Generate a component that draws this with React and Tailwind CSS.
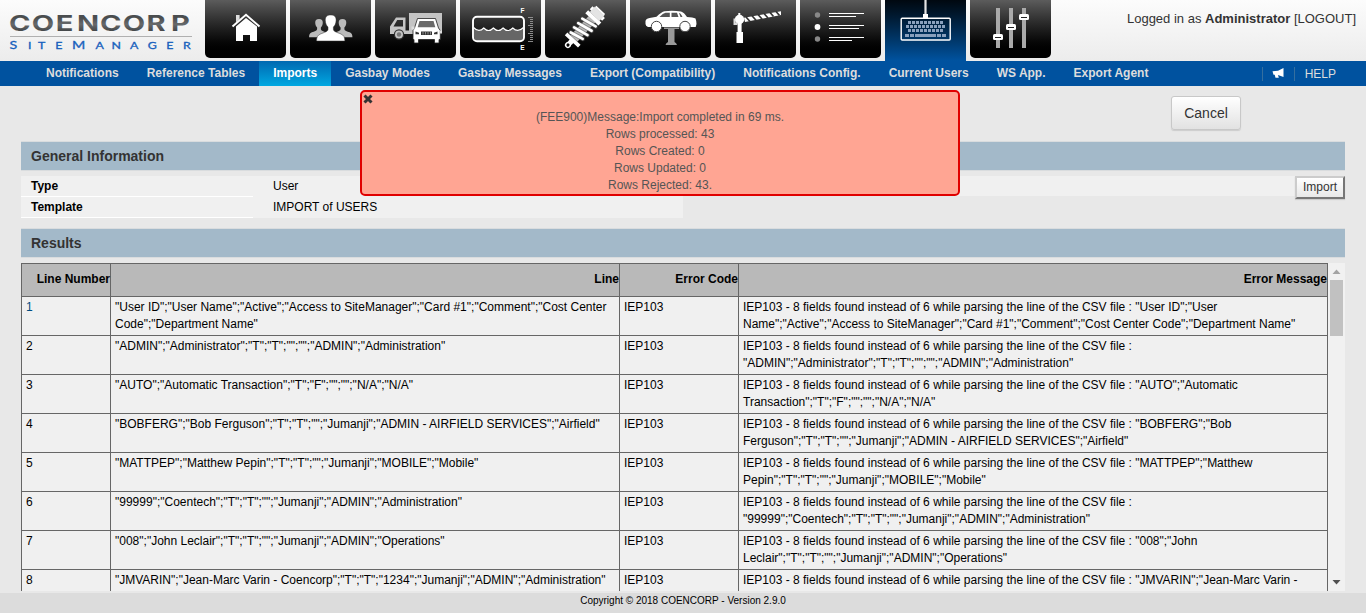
import React from 'react';

const House = () => (
  <>
    <path d="M31 15h3.600v4L31 22.500z" fill="#ddd" />
    <path d="M27.500 26.500 41 14.800 54.500 26.500" fill="none" stroke="#fff" strokeWidth="2" />
    <path d="M31 26.500 41 18l11 8.500V41h-7v-6h-7v6h-7z" fill="#fff" />
  </>
);

const Person = ({ fill }) => (
  <path d="M0 0c-4 0-5.600 2-5.400 5.500.2 3 1 5 2.700 6.500v2.500c0 2-4 3-7.500 4.500-3 1.300-3.800 3-4 7h28.400c-.2-4-1-5.700-4-7-3.500-1.500-7.500-2.500-7.500-4.500V12c1.700-1.500 2.500-3.500 2.700-6.500C5.600 2 4 0 0 0z" fill={fill} />
);

const People = () => (
  <>
    <g transform="translate(29 19) scale(.7)"><Person fill="#bbb" /></g>
    <g transform="translate(52.500 19) scale(.7)"><Person fill="#bbb" /></g>
    <g transform="translate(40.700 15)" stroke="#2c2c2c" strokeWidth=".5"><Person fill="#fff" /></g>
  </>
);

const Vehicles = () => (
  <>
    <path d="M34 13h33v20H34z" fill="#c4c4c4" />
    <path d="M21 17.500h9.500V34H15v-7.500zM22.200 20l-3.700 6.500H28V20z" fill="#c4c4c4" fillRule="evenodd" />
    <path d="M29 30.500h10V34H29z" fill="#c4c4c4" />
    <circle cx="24" cy="34.500" r="4.600" fill="#c4c4c4" stroke="#333" strokeWidth="1.200" />
    <circle cx="24" cy="34.500" r="2.200" fill="#777" />
    <path d="M42.500 18.500h18l3 9.500 1.800 2.500V39.500h-1.300V43h-4.500v-3.500H43.500V43H39v-3.500h-1V30.500L39.500 28z" fill="#fff" stroke="#222" strokeWidth=".8" />
    <path d="M44.500 21h14l1.800 6.300H42.700z" fill="#6a6a6a" />
    <path d="M46 31.500h11v3.500H46z" fill="#333" />
    <path d="M40.500 31.500l3.500 1.200v1.600h-3.500zM62.500 31.500 59 32.700v1.600h3.500z" fill="#333" />
    <path d="M47.500 32h1v2.500h-1zM50 32h1v2.500h-1zM52.500 32h1v2.500h-1zM55 32h1v2.500h-1z" fill="#888" />
    <path d="M36.500 26.500h3v3h-3zM64 30.500h3v3h-3z" fill="#ddd" />
  </>
);

const Tank = () => (
  <>
    <path d="M14 28q5.500 5 9.700 0 4.800 5 9.700 0 4.800 5 9.700 0 4.800 5 9.700 0 5 5 10.200 0v9q0 4-4 4H18q-4 0-4-4z" fill="#666" />
    <path d="M13.500 27.500q5.500 5.500 10.200.5 4.800 5 9.700 0 4.800 5 9.700 0 4.800 5 9.700 0 5 5 10.700-.5" fill="none" stroke="#fff" strokeWidth="1.200" />
    <rect x="13" y="16.800" width="51" height="24.500" rx="4" fill="none" stroke="#fff" strokeWidth="1.900" />
    <path d="M68 17.500h5M68 25.500h5M68 33.500h5M68 41.500h5M70 19.500h3M70 21.500h3M70 23.500h3M70 27.500h3M70 29.500h3M70 31.500h3M70 35.500h3M70 37.500h3M70 39.500h3" stroke="#999" strokeWidth=".9" />
    <text x="62.500" y="13" textAnchor="middle" fill="#fff" fontSize="6.500" fontWeight="700">F</text>
    <text x="62.500" y="50" textAnchor="middle" fill="#fff" fontSize="6.500" fontWeight="700">E</text>
  </>
);

const Spring = () => (
  <g transform="translate(23 45) rotate(-47)">
    <circle cx="0" cy="0" r="2.300" fill="none" stroke="#fff" strokeWidth="1.500" />
    <path d="M2.500 -2.500h3v5h-3zM5 -9h3.800v18H5z" fill="#fff" />
    <path d="M9 -4.500h26v9H9z" fill="#bbb" />
    <path d="M11 -6.500l3.500 13M17 -7.500l3.500 15M23 -7.500l3.500 15M29 -7.500l3.500 15" stroke="#444" strokeWidth="4.600" strokeLinecap="round" />
    <path d="M9 -4.500h26v9H9z" fill="#bbb" opacity=".55" />
    <path d="M11 -6.500l3.500 13M17 -7.500l3.500 15M23 -7.500l3.500 15M29 -7.500l3.500 15" stroke="#fff" strokeWidth="2.700" strokeLinecap="round" />
    <path d="M35 -9h4.200v18H35zM41 -8.500h4v17h-4zM46 -6h2v12h-2z" fill="#fff" />
    <path d="M39 -6.500h7.500v13H39z" fill="#e4e4e4" />
  </g>
);

const CarLift = () => (
  <>
    <path d="M34 27.500h15v1.500h-4.500v13q2 1 2.500 3H35.500q.5-2 2.500-3V29h-4z" fill="#999" />
    <path d="M15.500 21q.5-2.500 4-3l7-1.300q5-5 8-5.500 8-.8 16.500.2 3 .8 6 5.600 6 .3 8.500 1.500 1 2.500 1 5.500l-.8 3H18q-2.500-1-2.500-3z" fill="#fff" />
    <path d="M29.500 17q3.500-3.700 6-4.200h4.300V17zM41.500 12.800h5.500l1.500 4.200h-7zM49 12.900q2 .3 3.500 4.100h-2z" fill="#555" />
    <circle cx="26.500" cy="26.500" r="5.200" fill="#fff" stroke="#444" />
    <circle cx="55" cy="26.500" r="5.200" fill="#fff" stroke="#444" />
  </>
);

const Barrier = () => (
  <>
    <path d="M21.500 32h6.500v11h-6.500zM22.600 22h4v10h-4zM23.300 13h2v4h-2z" fill="#fff" />
    <circle cx="24.500" cy="19.500" r="4.700" fill="#fff" />
    <path d="M18.500 18.500h2v4h2v2.500h-4z" fill="#ddd" />
    <path d="M29 17.700l37-6.500v3.800L30 22z" fill="#fff" />
    <path d="M31 17l4 4.500M37 15.800l4 4.500M43 14.500l4 4.500M49 13.500l4 4.500M55 12.500l3.500 4M61 11.500l3.500 4" stroke="#333" strokeWidth="1.700" />
  </>
);

const ListIcon = () => (
  <>
    <circle cx="17.500" cy="15" r="2.700" fill="#888" />
    <circle cx="17.500" cy="27" r="2.900" fill="#fff" />
    <circle cx="17.500" cy="39" r="2.700" fill="#888" />
    <path d="M29 13.500h35M29 16.500h27M29 25.500h35M29 28.500h30M29 37.500h35M29 40.500h23" stroke="#fff" />
  </>
);

const Keyboard = () => (
  <>
    <path d="M40.500 0v15" stroke="#e4e4e4" strokeWidth="2.200" />
    <path d="M38 14h5v4h-5z" fill="#fff" />
    <rect x="16.200" y="18.200" width="49" height="21.800" rx="1" fill="none" stroke="#fff" strokeWidth="1.400" />
    <path d="M23 22.500h35M21 26.500h39M23 30.500h35" stroke="#8aa0bd" strokeWidth="3" strokeDasharray="3 1" />
    <path d="M20 35.500h4M25 35.500h4M30 35.500h21M52 35.500h4M57 35.500h4" stroke="#8aa0bd" strokeWidth="3" />
  </>
);

const Sliders = () => (
  <>
    <path d="M28 8v40M41 8v40M54 8v40" stroke="#aaa" strokeWidth="4" />
    {[[28, 37], [41, 27], [54, 17]].map(([x, y]) => (
      <g key={x}>
        <rect x={x - 5} y={y - 3} width="10" height="6" rx="1.500" fill="#fff" />
        <path d={`M${x - 3} ${y + 0.5}h6`} stroke="#222" />
      </g>
    ))}
  </>
);

const modules = [House, People, Vehicles, Tank, Spring, CarLift, Barrier, ListIcon, Keyboard, Sliders];

const navItems = [
  'Notifications', 'Reference Tables', 'Imports', 'Gasbay Modes', 'Gasbay Messages',
  'Export (Compatibility)', 'Notifications Config.', 'Current Users', 'WS App.', 'Export Agent',
];

const lines = [
  '"User ID";"User Name";"Active";"Access to SiteManager";"Card #1";"Comment";"Cost Center Code";"Department Name"',
  '"ADMIN";"Administrator";"T";"T";"";"";"ADMIN";"Administration"',
  '"AUTO";"Automatic Transaction";"T";"F";"";"";"N/A";"N/A"',
  '"BOBFERG";"Bob Ferguson";"T";"T";"";"Jumanji";"ADMIN - AIRFIELD SERVICES";"Airfield"',
  '"MATTPEP";"Matthew Pepin";"T";"T";"";"Jumanji";"MOBILE";"Mobile"',
  '"99999";"Coentech";"T";"T";"";"Jumanji";"ADMIN";"Administration"',
  '"008";"John Leclair";"T";"T";"";"Jumanji";"ADMIN";"Operations"',
  '"JMVARIN";"Jean-Marc Varin - Coencorp";"T";"T";"1234";"Jumanji";"ADMIN";"Administration"',
];

function Logo() {
  return (
    <svg className="h-[61px] w-[196px] shrink-0" viewBox="0 0 196 61">
      <defs>
        <linearGradient id="steel" x1="0" y1="0" x2="0" y2="1">
          <stop offset="0.3" stopColor="#4a4d4f" />
          <stop offset="0.55" stopColor="#66696b" />
          <stop offset="0.8" stopColor="#45484a" />
        </linearGradient>
      </defs>
      <text
        transform="scale(1.35 1)"
        x="6.600 23.600 41.300 57 74 91 108.600 126.700"
        y="31"
        fontFamily="Inter, 'DejaVu Sans', sans-serif"
        fontWeight="700"
        fontSize="21.500"
        fill="url(#steel)"
      >
        COENCORP
      </text>
      <path d="M10 36.500h182" stroke="#b0b0b0" />
      <text
        transform="scale(1.3 1)"
        x="7.300 21.500 29.200 42.500 55.300 73.500 85.800 100 113.600 127.800 140.800"
        y="49.300"
        fontFamily="Lato, sans-serif"
        fontSize="11"
        fill="#1660bd"
        stroke="#1660bd"
        strokeWidth=".3"
      >
        S<tspan fontSize="9.500">ITE</tspan>M<tspan fontSize="9.500">ANAGER</tspan>
      </text>
    </svg>
  );
}

function Header() {
  return (
    <header className="flex h-[61px] bg-linear-to-b from-[#fcfcfc] to-[#ececec]">
      <Logo />
      <div className="ml-[9px] flex gap-1">
        {modules.map((Icon, i) => (
          <div
            key={i}
            className={
              i === 8
                ? 'h-[61px] w-[81px] bg-linear-to-b from-[#000810] to-[#0053a0]'
                : 'h-[58px] w-[81px] rounded-b-[5px] bg-linear-to-b from-[#5c5c5c] to-black'
            }
          >
            <svg className="block h-[58px] w-[81px]" viewBox="0 0 81 58"><Icon /></svg>
          </div>
        ))}
      </div>
      <div className="ml-auto pt-[11px] pr-[10px] text-[13px] leading-[15px] text-[#333]">
        Logged in as <b>Administrator</b> [LOGOUT]
      </div>
    </header>
  );
}

function NavBar() {
  return (
    <nav className="flex h-[25px] bg-[#00529f] pl-8 text-[#ddd]">
      {navItems.map((label) => (
        <div
          key={label}
          className={
            label === 'Imports'
              ? 'bg-linear-to-b from-[#0069b1] to-[#00a8e1] px-[14px] leading-6 font-bold text-white'
              : 'px-[14px] leading-6 font-bold'
          }
        >
          {label}
        </div>
      ))}
      <div className="mt-[6px] mr-[30px] ml-auto flex h-[14px] items-center">
        <div className="flex h-[14px] w-[33px] items-center justify-center border-x border-[#356f9f]">
          <svg className="mb-[3px] h-[10px] w-3" viewBox="0 0 12 10">
            <path d="M11.500 0v9L6 7l.8 2.800H3.500L2.700 6.700H1.500L.5 3.200 6 2.800z" fill="#fff" />
          </svg>
        </div>
        <span className="ml-[10px] leading-[14px]">HELP</span>
      </div>
    </nav>
  );
}

const SectionTitle = ({ children }) => (
  <h2 className="h-[30px] border-y border-[#d9dcde] bg-[#a3b9c9] pl-[10px] text-[14px] leading-[28px] font-bold text-[#333]">{children}</h2>
);

function Results() {
  return (
    <div className="mt-[5px] flex h-[328px] overflow-hidden bg-[#f0f0f0]">
      <table className="w-[1307px] shrink-0 table-fixed border-separate border-spacing-0 self-start border-t border-l border-[#666] text-left">
        <colgroup>
          <col className="w-[89px]" />
          <col className="w-[509px]" />
          <col className="w-[119px]" />
          <col className="w-[589px]" />
        </colgroup>
        <thead>
          <tr className="h-[33px] bg-[#b9b9b9] text-right">
            {['Line Number', 'Line', 'Error Code', 'Error Message'].map((h) => (
              <th key={h} className="border-r border-b border-[#666] p-0 pb-[2px] text-right font-bold">{h}</th>
            ))}
          </tr>
        </thead>
        <tbody>
          {lines.map((line, i) => (
            <tr key={i} className="h-[39px] align-top">
              <td className={i === 0 ? 'border-r border-b border-[#666] px-1 py-[2px] text-[#004c80]' : 'border-r border-b border-[#666] px-1 py-[2px]'}>{i + 1}</td>
              <td className="border-r border-b border-[#666] px-1 py-[2px]">{line}</td>
              <td className="border-r border-b border-[#666] px-1 py-[2px]">IEP103</td>
              <td className="border-r border-b border-[#666] px-1 py-[2px]">
                {`IEP103 - 8 fields found instead of 6 while parsing the line of the CSV file : ${line}`}
              </td>
            </tr>
          ))}
        </tbody>
      </table>
      <div className="flex w-[17px] shrink-0 flex-col items-center bg-[#f1f1f1]">
        <svg className="h-[17px] w-[17px]" viewBox="0 0 17 17"><path d="M4.500 11l4-4.500 4 4.500z" fill="#a3a3a3" /></svg>
        <div className="h-14 w-[13px] bg-[#c1c1c1]" />
        <svg className="mt-auto h-[17px] w-[17px]" viewBox="0 0 17 17"><path d="M4.500 6l4 4.500 4-4.500z" fill="#505050" /></svg>
      </div>
    </div>
  );
}

function Message() {
  return (
    <div className="absolute top-[90px] left-[360px] h-[106px] w-[600px] rounded-[5px] border-2 border-[#e00000] bg-[#ffa593] pt-[17px] text-center leading-[17px] text-[#555]">
      <svg className="absolute top-[2px] left-px h-[10px] w-[10px]" viewBox="0 0 10 10">
        <path d="M1.500 1.500l7 7M8.500 1.500l-7 7" stroke="#333" strokeWidth="3" />
      </svg>
      <p>(FEE900)Message:Import completed in 69 ms.</p>
      <p>Rows processed: 43</p>
      <p>Rows Created: 0</p>
      <p>Rows Updated: 0</p>
      <p>Rows Rejected: 43.</p>
    </div>
  );
}

export default function App() {
  return (
    <div className="relative flex h-[613px] w-[1366px] flex-col overflow-hidden bg-[#e8e8e8] font-['Liberation_Sans',Arial,sans-serif] text-[12px] leading-[17px] text-black">
      <Header />
      <NavBar />
      <main className="flex h-[507px] flex-col px-[21px]">
        <div className="flex h-[55px] justify-end pt-[10px] pr-[104px]">
          <button className="h-[34px] w-[70px] rounded-[3px] border border-[#c8c8c8] bg-linear-to-b from-white to-[#e2e2e2] text-[14px] text-[#333] shadow-[0_1px_1px_#ccc]">Cancel</button>
        </div>
        <SectionTitle>General Information</SectionTitle>
        <div className="mt-[5px] flex h-[42px] items-start">
          <div className="w-[232px] font-bold">
            <div className="h-[21px] border-b border-white bg-[#f0f0f0] pl-[10px] leading-5">Type</div>
            <div className="h-[21px] border-b border-white bg-[#f0f0f0] pl-[10px] leading-5">Template</div>
          </div>
          <div className="h-[42px] w-[430px] bg-[#f0f0f0] pl-5">
            <div className="h-[21px] leading-5">User</div>
            <div className="h-[21px] leading-5">IMPORT of USERS</div>
          </div>
          <div className="h-5 flex-1 bg-[#f0f0f0]" />
          <button className="h-[23px] w-[50px] border-2 border-t-[#ccc] border-r-[#767676] border-b-[#767676] border-l-[#ccc] bg-linear-to-b from-white to-[#e8e8e8] leading-[17px] text-[#333] shadow-[0_1px_1px_#ccc]">Import</button>
        </div>
        <div className="mt-[10px]">
          <SectionTitle>Results</SectionTitle>
        </div>
        <Results />
      </main>
      <footer className="h-5 bg-[#dcdcdc] text-center text-[10px] leading-[16px]">Copyright © 2018 COENCORP - Version 2.9.0</footer>
      <Message />
    </div>
  );
}
